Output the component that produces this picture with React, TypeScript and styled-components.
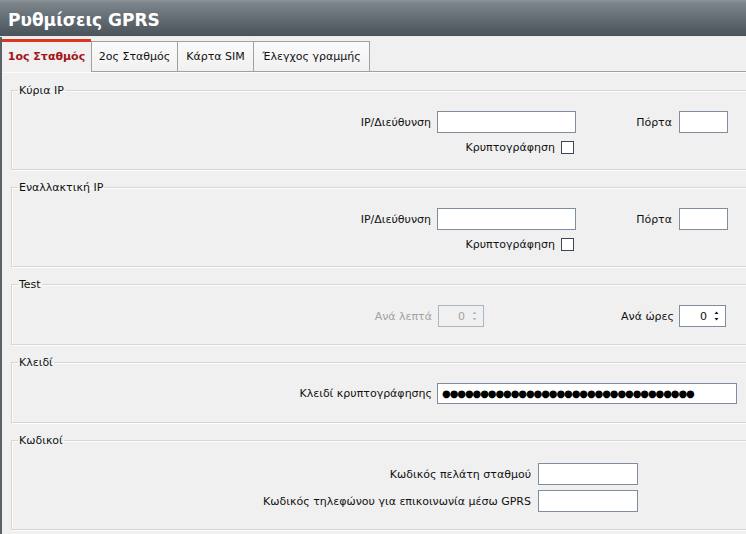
import { createGlobalStyle } from 'styled-components';
import styled from 'styled-components';

const GlobalStyle = createGlobalStyle`
  html, body {
    margin: 0;
    padding: 0;
    background: #f0f0f0;
    overflow: hidden;
  }
  body {
    font-family: 'DejaVu Sans', Verdana, sans-serif;
    font-size: 11px;
    color: #111;
  }
`;

const tabs = ['1ος Σταθμός', '2ος Σταθμός', 'Κάρτα SIM', 'Έλεγχος γραμμής'];
const tabWidths = [89, 86, 76, 117];

export default function App() {
  return (
    <Window>
      <GlobalStyle />
      <Header>Ρυθμίσεις GPRS</Header>
      <Frame>
        <TabStrip>
          {tabs.map((t, i) => (
            <Tab key={t} $active={i === 0} $w={tabWidths[i]} $last={i === tabs.length - 1}>
              {t}
            </Tab>
          ))}
        </TabStrip>

        <Panel>
          <Group>
            <Legend>Κύρια IP</Legend>
            <Body>
              <Row>
                <Label $w={419}>IP/Διεύθυνση</Label>
                <TextBox $w={139} $ml={6} />
                <Label $w={96}>Πόρτα</Label>
                <TextBox $w={49} $ml={7} />
              </Row>
              <Row>
                <Label $w={543}>Κρυπτογράφηση</Label>
                <Check type='checkbox' />
              </Row>
            </Body>
          </Group>

          <Group>
            <Legend>Εναλλακτική IP</Legend>
            <Body>
              <Row>
                <Label $w={419}>IP/Διεύθυνση</Label>
                <TextBox $w={139} $ml={6} />
                <Label $w={96}>Πόρτα</Label>
                <TextBox $w={49} $ml={7} />
              </Row>
              <Row>
                <Label $w={543}>Κρυπτογράφηση</Label>
                <Check type='checkbox' />
              </Row>
            </Body>
          </Group>

          <Group>
            <Legend>Test</Legend>
            <Body $pb={17}>
              <Row>
                <Label $w={420} $disabled>
                  Ανά λεπτά
                </Label>
                <Spinner value={0} $w={46} $ml={6} disabled />
                <Label $w={190}>Ανά ώρες</Label>
                <Spinner value={0} $w={47} $ml={5} />
              </Row>
            </Body>
          </Group>

          <Group>
            <Legend>Κλειδί</Legend>
            <Body $pb={18}>
              <Row>
                <Label $w={420}>Κλειδί κρυπτογράφησης</Label>
                <KeyBox $w={300} $ml={5} readOnly value={'●'.repeat(33)} />
              </Row>
            </Body>
          </Group>

          <Group>
            <Legend>Κωδικοί</Legend>
            <Body $gap={5} $pt={16} $pb={17}>
              <Row>
                <Label $w={519}>Κωδικός πελάτη σταθμού</Label>
                <TextBox $w={100} $ml={7} />
              </Row>
              <Row>
                <Label $w={519}>Κωδικός τηλεφώνου για επικοινωνία μέσω GPRS</Label>
                <TextBox $w={100} $ml={7} />
              </Row>
            </Body>
          </Group>
        </Panel>
      </Frame>
    </Window>
  );
}

function Spinner({
  value,
  $w,
  $ml,
  disabled,
}: {
  value: number;
  $w: number;
  $ml: number;
  disabled?: boolean;
}) {
  const c = disabled ? '#b8b8b8' : '#111';
  return (
    <SpinBox $w={$w} $ml={$ml} $disabled={disabled}>
      <SpinValue>{value}</SpinValue>
      <SpinArrows>
        <svg width='7' height='14' viewBox='0 0 7 14'>
          <path d='M3.5 2.5 L5.5 5 L1.5 5 Z' fill={c} />
          <path d='M1.5 9 L5.5 9 L3.5 11.5 Z' fill={c} />
        </svg>
      </SpinArrows>
    </SpinBox>
  );
}

const Window = styled.div`
  width: 746px;
  height: 534px;
  display: flex;
  flex-direction: column;
  overflow: hidden;
`;

const Header = styled.div`
  height: 37px;
  flex: none;
  box-sizing: border-box;
  padding: 8px 0 0 8px;
  background: linear-gradient(#8c9398 0, #7c858c 3px, #6a737a 14px, #4a525a 100%);
  border-bottom: 1px solid #e4eaed;
  color: #fff;
  font-size: 17px;
  font-weight: bold;
  line-height: 24px;
`;

const Frame = styled.div`
  flex: 1;
  display: flex;
  flex-direction: column;
  border-left: 2px solid #5a6167;
  min-height: 0;
`;

const TabStrip = styled.div`
  display: flex;
  align-items: flex-end;
  padding-top: 2px;
  border-bottom: 1px solid #a0a0a0;
`;

const Tab = styled.div<{ $active?: boolean; $w: number; $last?: boolean }>`
  box-sizing: border-box;
  width: ${(p) => p.$w}px;
  display: flex;
  align-items: center;
  justify-content: center;
  white-space: nowrap;
  ${(p) =>
    p.$active
      ? `
    height: 33px;
    margin-bottom: -1px;
    border-top: 3px solid #e2331f;
    background: #f0f0f0;
    color: #a3151b;
    font-weight: bold;
    padding-bottom: 1px;
    position: relative;
  `
      : `
    height: 30px;
    border-top: 1px solid #a0a0a0;
    border-left: 1px solid #a0a0a0;
    ${p.$last ? 'border-right: 1px solid #a0a0a0;' : ''}
    background: linear-gradient(#fafafa, #f1f1f1);
    color: #111;
  `}
`;

const Panel = styled.div`
  flex: 1;
  display: flex;
  flex-direction: column;
  gap: 11px;
  padding: 11px 0 0 9px;
  border-top: 1px solid #fbfbfb;
`;

const Group = styled.fieldset`
  margin: 0 -40px 0 0;
  padding: 0;
  border: 1px solid #d6d6d6;
  box-shadow: inset 1px 1px 0 #fcfcfc, 1px 1px 0 #fcfcfc;
  min-width: 0;
`;

const Legend = styled.legend`
  margin-left: 6px;
  padding: 0 1px;
  line-height: 13px;
  color: #111;
`;

const Body = styled.div<{ $gap?: number; $pt?: number; $pb?: number }>`
  display: flex;
  flex-direction: column;
  gap: ${(p) => p.$gap ?? 8}px;
  padding: ${(p) => p.$pt ?? 14}px 0 ${(p) => p.$pb ?? 15}px 0;
`;

const Row = styled.div`
  display: flex;
  align-items: center;
`;

const Label = styled.span<{ $w: number; $disabled?: boolean }>`
  flex: none;
  width: ${(p) => p.$w}px;
  text-align: right;
  line-height: 13px;
  white-space: nowrap;
  color: ${(p) => (p.$disabled ? '#a2a2a2' : '#111')};
`;

const TextBox = styled.input<{ $w: number; $ml: number }>`
  flex: none;
  box-sizing: border-box;
  width: ${(p) => p.$w}px;
  height: 22px;
  margin: 0 0 0 ${(p) => p.$ml}px;
  padding: 0 3px;
  border: 1px solid #7f8d9c;
  border-radius: 0;
  background: #fff;
  font: inherit;
  outline: none;
`;

const KeyBox = styled(TextBox)`
  height: 21px;
  font-size: 10px;
  letter-spacing: -1.1px;
  color: #000;
  padding-left: 4px;
`;

const Check = styled.input`
  appearance: none;
  flex: none;
  box-sizing: border-box;
  width: 13px;
  height: 13px;
  margin: 0 0 0 6px;
  border: 1px solid #3a4a5c;
  background: #fff;
`;

const SpinBox = styled.div<{ $w: number; $ml: number; $disabled?: boolean }>`
  flex: none;
  box-sizing: border-box;
  width: ${(p) => p.$w}px;
  height: 22px;
  margin-left: ${(p) => p.$ml}px;
  display: flex;
  align-items: center;
  border: 1px solid ${(p) => (p.$disabled ? '#a9b6c4' : '#7f8d9c')};
  background: ${(p) => (p.$disabled ? '#f0f0f0' : '#fff')};
  color: ${(p) => (p.$disabled ? '#a2a2a2' : '#111')};
`;

const SpinValue = styled.span`
  flex: 1;
  text-align: right;
  padding-right: 6px;
`;

const SpinArrows = styled.span`
  flex: none;
  width: 12px;
  display: flex;
  align-items: center;
  justify-content: flex-start;
`;
